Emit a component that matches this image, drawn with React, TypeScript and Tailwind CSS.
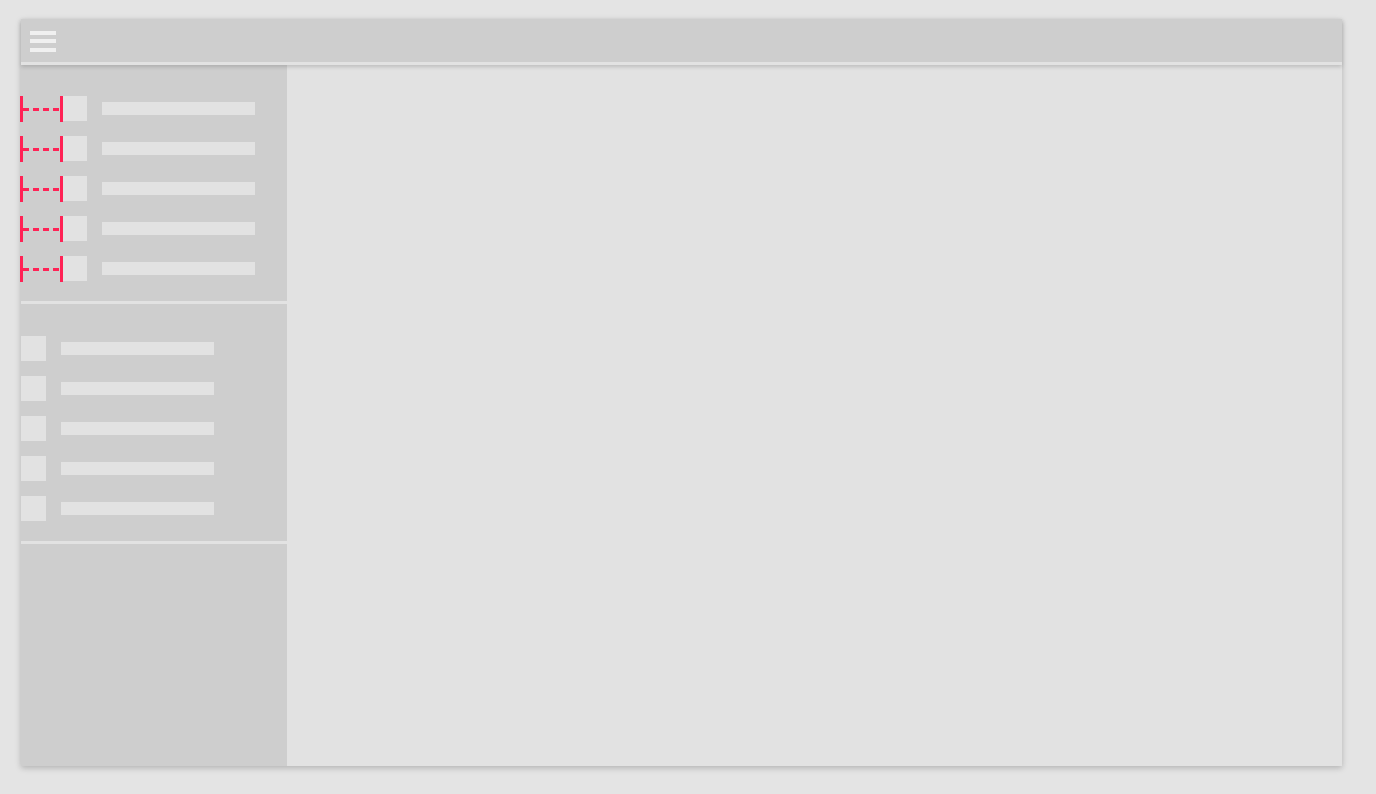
const groupOne = [0, 1, 2, 3, 4];
const groupTwo = [0, 1, 2, 3, 4];

function IndentMarker() {
    return (
        <div className="absolute left-[-42px] top-0 h-[26px] w-[45px]">
            <div className="absolute left-0 top-0 h-full w-[3px] bg-[#ff2255]"></div>
            <div className="absolute left-[40px] top-0 h-full w-[3px] bg-[#ff2255]"></div>
            <div className="absolute left-[3px] top-[12px] flex gap-[4px]">
                <span className="block w-[6px] h-[3px] bg-[#ff2255]"></span>
                <span className="block w-[6px] h-[3px] bg-[#ff2255]"></span>
                <span className="block w-[6px] h-[3px] bg-[#ff2255]"></span>
                <span className="block w-[6px] h-[3px] bg-[#ff2255]"></span>
            </div>
        </div>
    );
}

function NavRow({ marked }: { marked?: boolean }) {
    return (
        <div className="relative flex items-center gap-[15px] h-[25px]">
            {marked && <IndentMarker />}
            <div className="w-[25px] h-[25px] bg-[#e2e2e2]"></div>
            <div className="w-[153px] h-[13px] bg-[#e2e2e2]"></div>
        </div>
    );
}

export default function App() {
    return (
        <div className="w-full min-h-screen bg-[#e4e4e4] pt-[19px] pl-[21px]">
            <div className="w-[1321px] h-[747px] flex flex-col bg-[#e2e2e2] shadow-[0_2px_6px_rgba(0,0,0,0.22)]">
                <header className="relative z-10 h-[46px] shrink-0 bg-[#cecece] border-b-[3px] border-[#e2e2e2] shadow-[0_2px_4px_rgba(0,0,0,0.16)] flex items-center pl-[9px] pt-[1px]">
                    <div className="flex flex-col gap-[4.5px]">
                        <span className="block w-[26px] h-[4px] bg-[#f0f0f0]"></span>
                        <span className="block w-[26px] h-[4px] bg-[#f0f0f0]"></span>
                        <span className="block w-[26px] h-[4px] bg-[#f0f0f0]"></span>
                    </div>
                </header>

                <div className="flex flex-1 min-h-0">
                    <aside className="w-[266px] shrink-0 bg-[#cecece] flex flex-col">
                        <div className="pt-[31px] pb-[20px] pl-[41px] flex flex-col gap-[15px]">
                            {groupOne.map((i) => (
                                <NavRow key={i} marked />
                            ))}
                        </div>
                        <div className="h-[3px] bg-[#e2e2e2]"></div>
                        <div className="pt-[32px] pb-[20px] flex flex-col gap-[15px]">
                            {groupTwo.map((i) => (
                                <NavRow key={i} />
                            ))}
                        </div>
                        <div className="h-[3px] bg-[#e2e2e2]"></div>
                    </aside>
                    <main className="flex-1 bg-[#e2e2e2]"></main>
                </div>
            </div>
        </div>
    );
}
